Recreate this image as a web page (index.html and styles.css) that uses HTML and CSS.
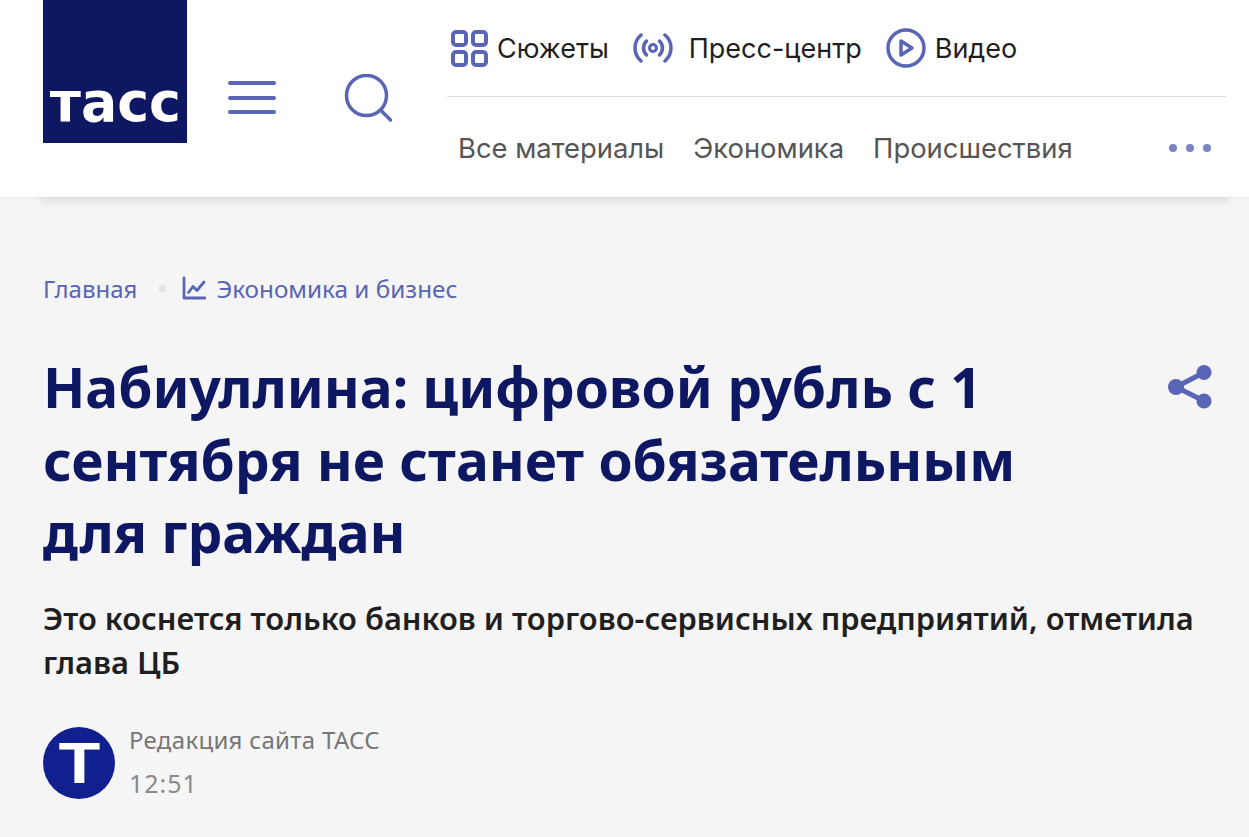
FILE: index.html
```html
<!DOCTYPE html>
<html lang="ru">
<head>
    <meta charset="UTF-8">
    <title>Набиуллина: цифровой рубль с 1 сентября не станет обязательным для граждан</title>
    <link rel="stylesheet" href="styles.css">
</head>
<body>
    <header class="header">
        <a class="logo" href="#"><span class="logo-text">тасс</span></a>
        <button class="burger" type="button" aria-label="Меню">
            <span></span><span></span><span></span>
        </button>
        <svg class="search" viewBox="0 0 48 48" fill="none" stroke="#5965b5" stroke-width="3.500" stroke-linecap="round">
            <circle cx="22.500" cy="21.500" r="20"/>
            <path d="M36.500 36l10 10"/>
        </svg>
        <nav class="nav">
            <div class="nav-top">
                <a class="nav-link" href="#">
                    <svg class="icon-stories" viewBox="0 0 38 37" fill="none" stroke="#5965b5" stroke-width="4">
                        <rect x="3" y="2" width="13" height="13" rx="3"/>
                        <rect x="23" y="2" width="13" height="13" rx="3"/>
                        <rect x="3" y="22" width="13" height="13" rx="3"/>
                        <rect x="23" y="22" width="13" height="13" rx="3"/>
                    </svg>
                    Сюжеты
                </a>
                <a class="nav-link press" href="#">
                    <svg class="icon-press" viewBox="0 0 40 30" fill="none" stroke="#5965b5" stroke-width="3.500" stroke-linecap="round">
                        <path d="M8 2C0 9 0 21 8 28"/>
                        <path d="M32 2c8 7 8 19 0 26"/>
                        <path d="M13.500 8c-4 4-4 10 0 14"/>
                        <path d="M26.500 8c4 4 4 10 0 14"/>
                        <circle cx="20" cy="15" r="3.500" stroke-width="3"/>
                    </svg>
                    Пресс-центр
                </a>
                <a class="nav-link" href="#">
                    <svg class="icon-video" viewBox="0 0 40 40" fill="none" stroke="#5965b5" stroke-width="3.500">
                        <circle cx="20" cy="20" r="18"/>
                        <path d="M15 13l11 7-11 7z" stroke-linejoin="round"/>
                    </svg>
                    Видео
                </a>
            </div>
            <div class="nav-bottom">
                <a href="#">Все материалы</a>
                <a href="#">Экономика</a>
                <a href="#">Происшествия</a>
                <div class="more"><i></i><i></i><i></i></div>
            </div>
        </nav>
    </header>

    <main class="article">
        <div class="breadcrumbs">
            <a href="#">Главная</a>
            <span class="crumb-dot"></span>
            <a class="crumb-section" href="#">
                <svg viewBox="0 0 24 24" fill="none" stroke="#5965b5" stroke-width="2.800" stroke-linejoin="round" stroke-linecap="round">
                    <path d="M2 2v20h21"/>
                    <path d="M6.500 16.500l4.500-6 4 4 7-8.500"/>
                </svg>
                Экономика и бизнес
            </a>
        </div>

        <div class="title-row">
            <h1>Набиуллина: цифровой рубль с 1 сентября не станет обязательным для граждан</h1>
            <svg class="share" viewBox="0 0 44 44" fill="#5965b5">
                <circle cx="8" cy="22" r="8"/>
                <circle cx="36" cy="7.500" r="7.500"/>
                <circle cx="36" cy="36" r="7.500"/>
                <path d="M8 22L36 7.500M8 22l28 14" stroke="#5965b5" stroke-width="5"/>
            </svg>
        </div>

        <p class="lead">Это коснется только банков и торгово-сервисных предприятий, отметила глава ЦБ</p>

        <div class="author">
            <div class="avatar"><span>Т</span></div>
            <div class="author-info">
                <div class="author-name">Редакция сайта ТАСС</div>
                <div class="author-time">12:51</div>
            </div>
        </div>
    </main>
</body>
</html>
```

FILE: styles.css
```css
* {
    box-sizing: border-box;
}

body {
    margin: 0;
    background-color: #f5f5f5;
    font-family: "Noto Sans", "Open Sans", sans-serif;
    color: #1f1f1f;
}

a {
    color: inherit;
    text-decoration: none;
}

/* header */
.header {
    position: relative;
    display: flex;
    align-items: flex-start;
    height: 197px;
    padding-left: 43px;
    background-color: #fff;
    box-shadow: 0 1px 3px rgba(0, 0, 0, 0.05);
}

/* the soft shadow stops short of the page edges */
.header::after {
    content: "";
    position: absolute;
    left: 40px;
    right: 20px;
    bottom: 0;
    height: 4px;
    box-shadow: 0 4px 7px rgba(0, 0, 0, 0.14);
}

.logo {
    display: flex;
    justify-content: center;
    align-items: flex-end;
    flex: none;
    width: 144px;
    height: 143px;
    padding-bottom: 9px;
    background-color: #0e1762;
    overflow: hidden;
}

.logo-text {
    font-family: "DejaVu Sans", sans-serif;
    font-size: 56px;
    font-weight: bold;
    line-height: 64px;
    color: #fff;
    transform: scaleX(0.96);
}

.burger {
    display: flex;
    flex-direction: column;
    justify-content: space-between;
    flex: none;
    width: 48px;
    height: 33px;
    margin: 81px 0 0 41px;
    padding: 0;
    border: 0;
    background: none;
}

.burger span {
    height: 4px;
    border-radius: 2px;
    background-color: #5965b5;
}

.search {
    flex: none;
    width: 48px;
    height: 48px;
    margin: 74px 0 0 68px;
}

.nav {
    flex: none;
    width: 779px;
    margin-left: 55px;
}

.nav-top {
    display: flex;
    align-items: center;
    gap: 24px;
    height: 97px;
    padding-left: 3px;
    border-bottom: 1px solid #ddd;
}

.nav-link {
    display: flex;
    align-items: center;
    gap: 9px;
    font-family: Inter, sans-serif;
    font-size: 27px;
}

.press {
    gap: 16px;
}

.icon-stories {
    width: 38px;
    height: 37px;
}

.icon-press {
    width: 40px;
    height: 30px;
}

.icon-video {
    width: 40px;
    height: 40px;
}

.nav-bottom {
    display: flex;
    align-items: center;
    gap: 29px;
    height: 101px;
    padding: 0 15px 0 11px;
    font-family: Inter, sans-serif;
    font-size: 27.400px;
    color: #555;
}

.more {
    display: flex;
    gap: 9px;
    margin-left: auto;
}

.more i {
    width: 8px;
    height: 8px;
    border-radius: 50%;
    background-color: #7a83c6;
}

/* article */
.article {
    padding: 0 37px 0 43px;
}

.breadcrumbs {
    display: flex;
    align-items: center;
    height: 34px;
    margin-top: 74px;
    font-size: 24px;
    color: #5965b5;
}

.crumb-dot {
    width: 7px;
    height: 7px;
    margin: 0 16px 0 22px;
    border-radius: 2px;
    background-color: #e4e4e4;
}

.crumb-section {
    display: flex;
    align-items: center;
    gap: 10px;
    font-size: 24.300px;
}

.crumb-section svg {
    width: 24px;
    height: 24px;
}

.title-row {
    display: flex;
    justify-content: space-between;
    align-items: flex-start;
    margin-top: 46px;
}

h1 {
    width: 1060px;
    margin: 0;
    font-size: 55px;
    font-weight: 700;
    line-height: 72.500px;
    color: #0e1762;
}

.share {
    flex: none;
    width: 44px;
    height: 44px;
    margin-top: 14px;
}

.lead {
    margin: 27px 0 0;
    font-size: 30.850px;
    font-weight: 600;
    line-height: 44px;
    color: #1f1f1f;
}

.author {
    display: flex;
    align-items: center;
    gap: 14px;
    margin-top: 41px;
}

.avatar {
    display: flex;
    justify-content: center;
    align-items: center;
    width: 72px;
    height: 72px;
    border-radius: 50%;
    background-color: #12208f;
    font-family: "Liberation Sans", sans-serif;
    font-size: 57px;
    font-weight: bold;
    color: #fff;
}

.avatar span {
    transform: scaleX(1.2);
}

.author-info {
    padding-bottom: 4px;
}

.author-name {
    font-size: 24px;
    letter-spacing: 0.300px;
    line-height: 30px;
    color: #777;
}

.author-time {
    margin-top: 13px;
    font-size: 25px;
    letter-spacing: 1px;
    line-height: 30px;
    color: #8a8a8a;
}
```
